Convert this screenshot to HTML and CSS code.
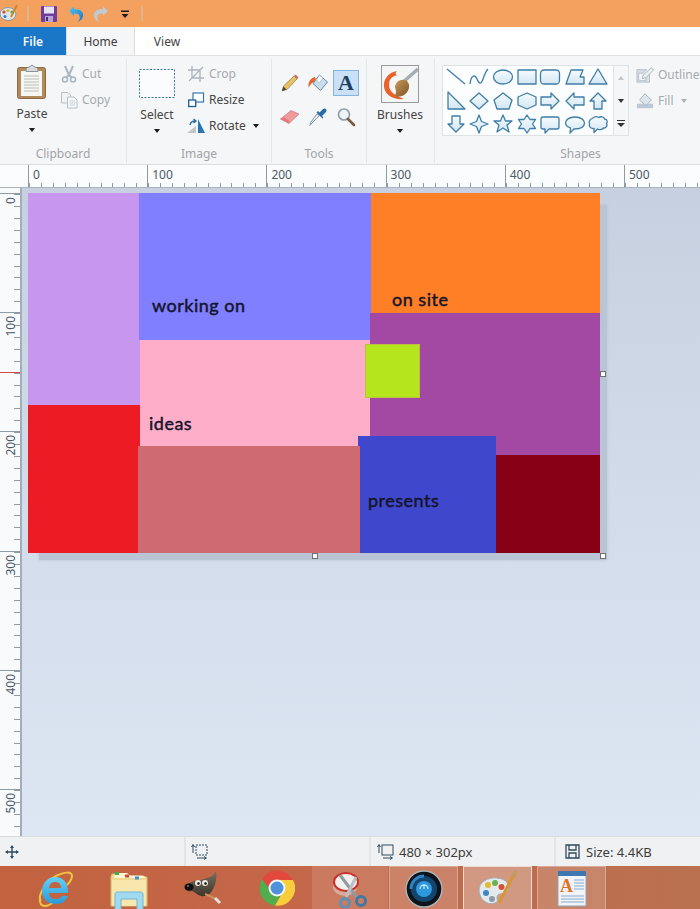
FILE: index.html
```html
<!DOCTYPE html>
<html lang="en">
<head>
<meta charset="utf-8">
<title>Paint</title>
<link rel="stylesheet" href="styles.css">
</head>
<body>
<div class="app">
  <svg width="0" height="0" class="defs">
    <defs>
      <linearGradient id="gShape" x1="0" y1="0" x2="0" y2="1"><stop offset="0" stop-color="#f6fbfe"/><stop offset="1" stop-color="#d3e6f2"/></linearGradient>
      <linearGradient id="gBlue" x1="0" y1="0" x2="1" y2="1"><stop offset="0" stop-color="#4cc3f1"/><stop offset="1" stop-color="#1c78c8"/></linearGradient>
      <linearGradient id="gIe" x1="0" y1="0" x2="0" y2="1"><stop offset="0" stop-color="#63d0f5"/><stop offset="1" stop-color="#2a9ad8"/></linearGradient>
      <linearGradient id="gBristle" x1="0" y1="0" x2="1" y2="1"><stop offset="0" stop-color="#c99a55"/><stop offset="1" stop-color="#7d5429"/></linearGradient>
      <linearGradient id="gGimp" x1="0" y1="0" x2="0" y2="1"><stop offset="0" stop-color="#7a6f60"/><stop offset="1" stop-color="#3e362c"/></linearGradient>
    </defs>
  </svg>

  <header class="titlebar">
    <svg class="qa-app" width="18" height="18" viewBox="0 0 18 18"><ellipse cx="8" cy="10" rx="8" ry="6.5" fill="#dfe6ea" stroke="#8b99a3"/><circle cx="4" cy="8" r="1.6" fill="#d9443c"/><circle cx="8" cy="6.5" r="1.6" fill="#e3b62f"/><circle cx="12" cy="8" r="1.6" fill="#59a845"/><circle cx="5" cy="12.5" r="1.6" fill="#3b82c4"/><path d="M17 1 11 13" stroke="#c78a2e" stroke-width="2"/></svg>
    <span class="qa-sep"></span>
    <svg class="qa-save" width="18" height="18" viewBox="0 0 18 18"><rect x="1" y="1" width="16" height="16" rx="1" fill="#6d3f9c"/><rect x="4" y="1.5" width="10" height="7" fill="#e9e2f3"/><rect x="5" y="11" width="8" height="6" fill="#b9a2d4"/><rect x="6" y="12" width="2" height="4" fill="#4b2a75"/></svg>
    <svg class="qa-undo" width="18" height="18" viewBox="0 0 18 18"><path d="M2 6 7 1.5V4.300C12.500 3.800 17 6.500 16 11.500 15.500 14 13.500 16 10.500 17 13 14.500 13.500 12 12 10 11 8.700 9 8.300 7 8.500V11Z" fill="url(#gBlue)"/></svg>
    <svg class="qa-redo" width="18" height="18" viewBox="0 0 18 18"><path d="M16 6 11 1.500V4.300C5.500 3.800 1 6.500 2 11.500 2.500 14 4.500 16 7.500 17 5 14.500 4.500 12 6 10 7 8.700 9 8.300 11 8.500V11Z" fill="#bccbd6"/></svg>
    <svg class="qa-more" width="10" height="10" viewBox="0 0 10 10"><path d="M1 1.500H9V3H1ZM1.500 5H8.500L5 9Z" fill="#1c1c1c"/></svg>
    <span class="qa-sep qa-sep-end"></span>
  </header>

  <nav class="tabs">
    <span class="tab tab-file">File</span>
    <span class="tab tab-home">Home</span>
    <span class="tab tab-view">View</span>
  </nav>

  <section class="ribbon">
    <div class="group group-clipboard">
      <div class="group-body">
        <div class="big-btn">
          <svg width="32" height="36" viewBox="0 0 32 36"><rect x="1.500" y="3.500" width="28" height="31" rx="2" fill="#b08a5a" stroke="#8b6a42"/><rect x="5" y="7" width="21" height="25" fill="#f7f7f2"/><path d="M8 12H23M8 15H23M8 18H23M8 21H23M8 24H23M8 27H23" stroke="#b9bcbc"/><path d="M10 6C10 3 13 4 14 2.500 15 1 17 1 18 2.500 19 4 22 3 22 6V7.500H10Z" fill="#d8dbde" stroke="#8f9296"/></svg>
          <span class="big-label">Paste</span>
          <span class="caret"></span>
        </div>
        <div class="small-col">
          <div class="small-btn is-off"><svg width="18" height="18" viewBox="0 0 18 18"><path d="M5 1 9 10 13 1M9 10 5.500 13M9 10 12.500 13" fill="none" stroke="#aab7c3" stroke-width="2"/><circle cx="5" cy="14.500" r="2.500" fill="none" stroke="#aab7c3" stroke-width="1.500"/><circle cx="13" cy="14.500" r="2.500" fill="none" stroke="#aab7c3" stroke-width="1.500"/></svg><span>Cut</span></div>
          <div class="small-btn is-off"><svg width="18" height="18" viewBox="0 0 18 18"><path d="M1.500 1.500H8L10.500 4V12H1.500Z" fill="#f0f2f4" stroke="#b6c0c9"/><path d="M7.500 6H14L17 9V17H7.500Z" fill="#f7f8f9" stroke="#b6c0c9"/><path d="M9.500 10H15M9.500 12H15M9.500 14H15" stroke="#c9d0d6"/></svg><span>Copy</span></div>
        </div>
      </div>
      <div class="group-label">Clipboard</div>
    </div>

    <div class="group group-image">
      <div class="group-body">
        <div class="big-btn big-select">
          <svg width="36" height="29" viewBox="0 0 36 29"><rect x="0.500" y="0.500" width="35" height="28" fill="#fafcfd" stroke="#3f76a3" stroke-dasharray="2 1.500"/></svg>
          <span class="big-label">Select</span>
          <span class="caret"></span>
        </div>
        <div class="small-col">
          <div class="small-btn is-off"><svg width="16" height="16" viewBox="0 0 16 16"><path d="M4 0V12H16M0 4H12V16M1 15 15 1" fill="none" stroke="#a9b5bf" stroke-width="1.300"/></svg><span>Crop</span></div>
          <div class="small-btn"><svg width="16" height="16" viewBox="0 0 16 16"><rect x="5" y="1" width="10.500" height="9" fill="#fff" stroke="#3a78a8" stroke-width="1.200"/><rect x="0.700" y="8" width="7" height="6.500" fill="#fff" stroke="#1d5f92" stroke-width="1.300"/></svg><span>Resize</span></div>
          <div class="small-btn"><svg width="18" height="16" viewBox="0 0 18 16"><path d="M11 1 18 15H11Z" fill="#2775b2"/><path d="M0 15 9 8V15Z" fill="#c4c7ca"/><path d="M3 7C3.500 4 5.500 3 8 3M6.500 1 9 3 6.500 5" fill="none" stroke="#2b6da3" stroke-width="1.400"/></svg><span>Rotate</span><span class="caret caret-inline"></span></div>
        </div>
      </div>
      <div class="group-label">Image</div>
    </div>

    <div class="group group-tools">
      <div class="tool-grid">
        <span class="tool"><svg width="20" height="20" viewBox="0 0 20 20"><path d="M2 18 3.500 13 14 3 17 6 7 16.500Z" fill="#e8c25c" stroke="#8a7a55" stroke-width=".7"/><path d="M2 18 3.500 13.500 6.500 16.500Z" fill="#4f4434"/><path d="M14 3 17 6 18.500 4.500 15.500 1.500Z" fill="#c96a6a"/></svg></span>
        <span class="tool"><svg width="22" height="20" viewBox="0 0 22 20"><path d="M12.500 2 20.500 9 13.500 17.500 6 10.500Z" fill="#c9deec" stroke="#6b8aa1"/><path d="M9.500 7 12.500 2 16 5 12.500 10Z" fill="#f7fafc" stroke="#8ea7b9" stroke-width=".6"/><path d="M8 4C3.500 5 1 9 1.500 14 3 13.500 3.500 10.500 6 9.500L9 6.500Z" fill="#e8642a"/></svg></span>
        <span class="tool tool-on"><span class="tool-a">A</span></span>
        <span class="tool"><svg width="22" height="20" viewBox="0 0 22 20"><path d="M1.500 12 12 3.500 20 7 10 16.500Z" fill="#f09a9c" stroke="#c47a7c" stroke-width=".7"/><path d="M1.500 12 10 16.500 10.500 14 4.500 10Z" fill="#e47a7e"/></svg></span>
        <span class="tool"><svg width="20" height="20" viewBox="0 0 20 20"><path d="M11.500 8.500 4 16 2 18.500 2.500 15.500 9 7Z" fill="#e4edf3" stroke="#8a9aa6"/><path d="M8.500 5.500 14.500 11.500 15.500 10.500 14 9 18 5C19.500 2.500 17 .5 15 2L11.500 5.500 10 4Z" fill="#2a6cab"/></svg></span>
        <span class="tool"><svg width="20" height="20" viewBox="0 0 20 20"><circle cx="8" cy="7.500" r="5.500" fill="#edf5fa" stroke="#8f9ba4" stroke-width="1.600"/><path d="M12 12 18 18" stroke="#7a5b3c" stroke-width="2.600" stroke-linecap="round"/></svg></span>
      </div>
      <div class="group-label">Tools</div>
    </div>

    <div class="group group-brushes">
      <div class="group-body brushes-body">
        <div class="big-btn">
          <span class="brush-box"><svg width="36" height="36" viewBox="0 0 36 36"><rect width="36" height="36" fill="#f4f5f5"/><path d="M36 3 20 17" stroke="#a4adb3" stroke-width="3.500"/><path d="M15 5C7 6 1 13 2 21 3 29 11 34 22 33 14 30 7 26 7 19 7 13 10 10 16 9 13 9 13 7 15 5Z" fill="#e9622a"/><path d="M13 21C14 15 20 12 25 15 29 19 27 26 22 29 19 31 15 31 12 30 15 28 14 24 13 21Z" fill="url(#gBristle)"/></svg></span>
          <span class="big-label">Brushes</span>
          <span class="caret"></span>
        </div>
      </div>
      <div class="group-label">&nbsp;</div>
    </div>

    <div class="group group-shapes">
      <div class="group-body shapes-body">
        <div class="gallery">
          <svg class="gallery-svg" width="170" height="70" viewBox="0 0 170 70">
            <g fill="url(#gShape)" stroke="#3f7ea6" stroke-width="1.300" stroke-linejoin="round">
              <g transform="translate(13 11)"><path d="M-9-8 9 7" fill="none"/></g>
              <g transform="translate(36 11)"><path d="M-9 7C-8-2-4-3-2 2S2 8 4 2 7-6 9-8" fill="none"/></g>
              <g transform="translate(60 11)"><ellipse rx="9.500" ry="7"/></g>
              <g transform="translate(84 11)"><rect x="-9" y="-7" width="18" height="14"/></g>
              <g transform="translate(107 11)"><rect x="-9.500" y="-7" width="19" height="14" rx="3.500"/></g>
              <g transform="translate(132 11)"><path d="M-9 7-4-7H8L5 0H9V7Z"/></g>
              <g transform="translate(155 11)"><path d="M0-8 9 7H-9Z"/></g>

              <g transform="translate(13 35)"><path d="M-8-9 9 8H-8Z"/></g>
              <g transform="translate(36 35)"><path d="M0-8 9 0 0 8-9 0Z"/></g>
              <g transform="translate(60 35)"><path d="M0-8 9-1 6 8H-6L-9-1Z"/></g>
              <g transform="translate(84 35)"><path d="M0-8 9-4V4L0 8-9 4V-4Z"/></g>
              <g transform="translate(107 35)"><path d="M-9-4H1V-8L9 0 1 8V4H-9Z"/></g>
              <g transform="translate(132 35)"><path d="M9-4H-1V-8L-9 0-1 8V4H9Z"/></g>
              <g transform="translate(155 35)"><path d="M0-8 8 0H4V8H-4V0H-8Z"/></g>

              <g transform="translate(13 58)"><path d="M0 8 8 0H4V-8H-4V0H-8Z"/></g>
              <g transform="translate(36 58)"><path d="M0-9 2.500-2.500 9 0 2.500 2.500 0 9-2.500 2.500-9 0-2.500-2.500Z"/></g>
              <g transform="translate(60 58)"><path d="M0-9 2.500-3H9L4 1 6 8 0 4-6 8-4 1-9-3H-2.500Z"/></g>
              <g transform="translate(84 58)"><path d="M0-9 3-4.500H8.500L5.500 0 8.500 4.500H3L0 9-3 4.500H-8.500L-5.500 0-8.500-4.500H-3Z"/></g>
              <g transform="translate(107 58)"><path d="M-7-7H7Q9-7 9-5V3Q9 5 7 5H-1L-5 9V5H-7Q-9 5-9 3V-5Q-9-7-7-7Z"/></g>
              <g transform="translate(132 58)"><path d="M0-7C6-7 9.500-4 9.500-1 9.500 3 5 5-1 5L-5 9-4.500 4C-7.500 3-9.500 1-9.500-1-9.500-4-6-7 0-7Z"/></g>
              <g transform="translate(155 58)"><path d="M-5-6C-3-8 0-7 1-6.500 3-8 6-7 6.500-5 9-5 10-2 8.500-.5 10 1.500 8 4.500 5.500 4 4 6 1 6-.5 5L-4 8.500-4 4.500C-7 5-9.500 2.500-8.500 0-10-2-8-5-5-6Z"/></g>
            </g>
          </svg>
          <div class="gallery-scroll">
            <span class="gs-cell"><span class="gs-up"></span></span>
            <span class="gs-cell"><span class="gs-down"></span></span>
            <span class="gs-cell"><span class="gs-more"></span></span>
          </div>
        </div>
        <div class="small-col outline-col">
          <div class="small-btn is-off"><svg width="20" height="18" viewBox="0 0 20 18"><path d="M1 3H12L8 7H3V15H11V11L15 7V17H1Z" fill="#d8dee3" stroke="#a9b4bd" stroke-width=".8"/><path d="M7 13 8 9 17 1 19.500 3.500 11 12Z" fill="#eceff1" stroke="#a9b4bd"/></svg><span>Outline</span></div>
          <div class="small-btn is-off"><svg width="20" height="18" viewBox="0 0 20 18"><rect x="1" y="12" width="18" height="5" fill="#bcc9d6"/><path d="M10 1 17 8 11 14 4 8Z" fill="#dde5ec" stroke="#a3b0bb"/></svg><span>Fill</span><span class="caret caret-inline caret-off"></span></div>
        </div>
      </div>
      <div class="group-label shapes-label">Shapes</div>
    </div>
  </section>

  <div class="ruler-top">
    <span class="rt-seg">0</span><span class="rt-seg">100</span><span class="rt-seg">200</span><span class="rt-seg">300</span><span class="rt-seg">400</span><span class="rt-seg">500</span>
  </div>

  <main class="stage">
    <aside class="ruler-left">
      <span class="rl-seg"><span class="rl-num">0</span></span>
      <span class="rl-seg"><span class="rl-num">100</span></span>
      <span class="rl-seg"><span class="rl-num">200</span></span>
      <span class="rl-seg"><span class="rl-num">300</span></span>
      <span class="rl-seg"><span class="rl-num">400</span></span>
      <span class="rl-seg"><span class="rl-num">500</span></span>
      <span class="rl-marker"></span>
    </aside>
    <div class="workspace">
      <div class="canvas-shadow"></div>
      <div class="canvas">
        <div class="block b-lavender"></div>
        <div class="block b-peri"></div>
        <div class="block b-orange"></div>
        <div class="block b-purple"></div>
        <div class="block b-pink"></div>
        <div class="block b-red"></div>
        <div class="block b-blue"></div>
        <div class="block b-dusty"></div>
        <div class="block b-maroon"></div>
        <div class="block b-lime"></div>
        <span class="hand t-working">working on</span>
        <span class="hand t-site">on site</span>
        <span class="hand t-ideas">ideas</span>
        <span class="hand t-presents">presents</span>
      </div>
      <span class="handle h-r"></span>
      <span class="handle h-b"></span>
      <span class="handle h-c"></span>
    </div>
  </main>

  <footer class="status">
    <div class="st st-pos"><svg width="16" height="16" viewBox="0 0 16 16"><path d="M8 1 10 4H8.700V7.300H12V6L15 8 12 10V8.700H8.700V12H10L8 15 6 12H7.300V8.700H4V10L1 8 4 6V7.300H7.300V4H6Z" fill="#2f4a5e"/></svg></div>
    <div class="st st-sel"><svg width="18" height="17" viewBox="0 0 18 17"><rect x="5" y="2" width="11" height="10" fill="none" stroke="#2f4a5e" stroke-dasharray="2 1"/><path d="M2 2V10M.5 4 2 1.500 3.500 4M6 15H15M13 13.500 15.500 15 13 16.500" fill="none" stroke="#2f4a5e"/></svg></div>
    <div class="st st-dim"><svg width="18" height="17" viewBox="0 0 18 17"><rect x="5" y="2" width="11" height="10" fill="none" stroke="#2f4a5e"/><path d="M2 2V10M.5 4 2 1.500 3.500 4M6 15H15M13 13.500 15.500 15 13 16.500" fill="none" stroke="#2f4a5e"/></svg><span>480 × 302px</span></div>
    <div class="st st-size"><svg width="15" height="15" viewBox="0 0 15 15"><path d="M1 1H14V14H1ZM4 1V6H11V1M4 14V9H11V14" fill="none" stroke="#2f4a5e" stroke-width="1.300"/></svg><span>Size: 4.4KB</span></div>
  </footer>

  <div class="taskbar">
    <span class="task"><svg width="36" height="38" viewBox="0 0 36 38"><path d="M4 31C0 27 8 12 19 6 27 2 35 1 35 6 35 9 33 12 30 15" fill="none" stroke="#efc43e" stroke-width="2"/><path d="M3 27C2 33 4 36 8 36 11 36 14 34 17 32" fill="none" stroke="#efc43e" stroke-width="2"/><path d="M5 21C5 13 11 7 18 7 26 7 31 13 31 21V23H12C12 27 15 29 19 29 22 29 24 28 25 26H31C29 31 25 34 19 34 11 34 5 29 5 21ZM12 18H24C24 14 21.500 12 18 12 15 12 12.500 14 12 18Z" fill="url(#gIe)"/></svg></span>
    <span class="task"><svg width="38" height="40" viewBox="0 0 38 40"><path d="M1 7V36H37V7L19 6 16 4H2Z" fill="#f0d98f" stroke="#d6bd75"/><path d="M5 3H17L20 5.500H33L36 8H4Z" fill="#fff4d0"/><rect x="5" y="2" width="4" height="3" fill="#37b24a"/><rect x="15" y="4.500" width="4" height="3" fill="#d8413a"/><rect x="25" y="6.500" width="4" height="3" fill="#3b93d6"/><path d="M2 10H36V36H2Z" fill="#f7e7ad"/><path d="M5 40V24C5 23 6 22 7 22H31C32 22 33 23 33 24V40H27V29H11V40Z" fill="#9fdaf0" stroke="#73b7d6"/></svg></span>
    <span class="task"><svg width="40" height="36" viewBox="0 0 40 36"><path d="M3 16C6 12 10 12 13 10 17 11 20 9 24 8 28 7 31 5 33 1 34 8 33 14 30 19 28 24 23 27 18 26 14 25 12 22 9 21 5 22 1 20 3 16Z" fill="url(#gGimp)"/><ellipse cx="6" cy="17" rx="4.500" ry="3.500" fill="#111"/><circle cx="5" cy="16" r="1" fill="#777"/><circle cx="15" cy="13" r="3" fill="#ece9e1"/><circle cx="22" cy="13" r="3" fill="#ece9e1"/><circle cx="15.500" cy="13.500" r="1.300" fill="#111"/><circle cx="22.500" cy="13.500" r="1.300" fill="#111"/><path d="M22 24 33 29" stroke="#c8935f" stroke-width="2"/><path d="M32 28 37 33" stroke="#e7e2d8" stroke-width="3"/></svg></span>
    <span class="task"><svg width="36" height="36" viewBox="0 0 36 36"><circle cx="18" cy="18" r="17.500" fill="#e2483c"/><path d="M3 9A17.500 17.500 0 0 0 16 35.500L24 22H13Z" fill="#52ae4c"/><path d="M18 10H34A17.500 17.500 0 0 1 16 35.500L25 20Z" fill="#f7cd3b"/><circle cx="18" cy="18" r="8.500" fill="#f4f6f8"/><circle cx="18" cy="18" r="6.500" fill="#4f92dc"/></svg></span>
    <span class="task task-hover"><svg width="38" height="38" viewBox="0 0 38 38"><ellipse cx="14" cy="17" rx="12" ry="9" fill="#d9a896"/><ellipse cx="15" cy="12" rx="12" ry="9" fill="#f3efec" stroke="#c9322c" stroke-width="2"/><path d="M9 5 27 29" stroke="#8f9aa0" stroke-width="3"/><path d="M25 7 15 27" stroke="#b7c0c6" stroke-width="3"/><circle cx="30" cy="31" r="4.500" fill="none" stroke="#3f78a5" stroke-width="3"/><circle cx="14" cy="33" r="4.500" fill="none" stroke="#5f8fb5" stroke-width="3"/></svg></span>
    <span class="task task-box"><svg width="38" height="38" viewBox="0 0 38 38"><circle cx="19" cy="19" r="18" fill="#0e1319"/><circle cx="19" cy="19" r="18" fill="none" stroke="#aab2b8" stroke-width="1.500"/><circle cx="19" cy="19" r="13" fill="#13466f"/><path d="M6 19A13 13 0 0 1 19 6" fill="none" stroke="#2d84c4" stroke-width="3"/><circle cx="19" cy="19" r="8" fill="#2f97dc"/><path d="M15 19A4 4 0 0 1 23 19M19 19V15" fill="none" stroke="#bfe6fa" stroke-width="1.300"/></svg></span>
    <span class="task task-box task-active"><svg width="42" height="38" viewBox="0 0 42 38"><path d="M2 20C2 12 11 7 20 8 30 9 33 15 31 20 29 25 24 22 21 25 18 28 23 31 18 33 10 36 2 29 2 20Z" fill="#e4e9ec" stroke="#a2adb4"/><circle cx="11" cy="15" r="3" fill="#e2b92f"/><circle cx="18" cy="13" r="3" fill="#6cb24a"/><circle cx="24.500" cy="17" r="3" fill="#d84e3d"/><circle cx="9" cy="23" r="3" fill="#3d88c5"/><circle cx="15" cy="29" r="3" fill="#8a9aa6"/><path d="M37 4 22 33" stroke="#d69630" stroke-width="3"/><path d="M34 6 37 0 41 2 38 8Z" fill="#c49a63"/></svg></span>
    <span class="task task-box"><svg width="30" height="38" viewBox="0 0 30 38"><path d="M1 4H29V36H1Z" fill="#f1f4f7" stroke="#93a3b1"/><rect x="1" y="1" width="28" height="5" fill="#3f77b0"/><text x="3" y="22" class="wp-a">A</text><path d="M17 10H27M17 13H27M17 16H27M17 19H27M4 26H27M4 29H27M4 32H27" stroke="#86abd1"/></svg></span>
  </div>
</div>
</body>
</html>
```

FILE: styles.css
```css
* { box-sizing: border-box; }
html, body { margin: 0; padding: 0; }
body { font-family: "Noto Sans", "Open Sans", sans-serif; font-size: 12px; color: #444; background: #fff; }
.app { width: 700px; height: 909px; display: flex; flex-direction: column; overflow: hidden; position: relative; }
.defs { position: absolute; }
svg { display: block; flex: none; }

/* title bar */
.titlebar { height: 27px; background: #f4a160; display: flex; align-items: center; flex: none; }
.qa-app { margin-left: 0; margin-top: -2px; }
.qa-sep { width: 2px; height: 15px; background: #e0b48c; margin-left: 9px; }
.qa-save { margin-left: 11px; }
.qa-undo { margin-left: 9px; }
.qa-redo { margin-left: 7px; }
.qa-more { margin-left: 10px; }
.qa-sep-end { margin-left: 11px; }

/* tabs */
.tabs { height: 28px; background: #fff; display: flex; flex: none; }
.tab { display: flex; align-items: center; justify-content: center; font-size: 12px; }
.tab-file { width: 66px; background: #1a76c6; color: #f2f7fc; font-weight: 600; }
.tab-home { width: 69px; background: #f5f6f7; border-left: 1px solid #dcdfe2; border-right: 1px solid #dcdfe2; color: #3c3c3c; }
.tab-view { width: 64px; color: #444; }

/* ribbon */
.ribbon { height: 110px; background: #f5f6f7; display: flex; border-top: 1px solid #dfe1e4; border-bottom: 1px solid #dcdfe2; flex: none; }
.group { display: flex; flex-direction: column; border-right: 1px solid #e4e6e8; margin: 3px 0 1px; flex: none; }
.group-body { flex: 1; display: flex; min-height: 0; }
.group-label { height: 18px; text-align: center; color: #a0a4a8; font-size: 12px; line-height: 18px; }
.group-clipboard { width: 127px; }
.group-image { width: 145px; }
.group-tools { width: 95px; }
.group-brushes { width: 68px; }
.group-shapes { width: 265px; border-right: 0; overflow: hidden; }

.big-btn { display: flex; flex-direction: column; align-items: center; width: 50px; padding-top: 5px; flex: none; }
.group-clipboard .big-btn { margin-left: 7px; width: 50px; }
.big-label { margin-top: 5px; line-height: 18px; color: #444; }
.big-select { margin-left: 5px; padding-top: 10px; }
.big-select .big-label { margin-top: 8px; }
.caret { width: 0; height: 0; border: 3.500px solid transparent; border-top: 4px solid #1c1c1c; border-bottom: 0; margin-top: 5px; }
.caret-inline { margin: 0 0 0 3px; }
.caret-off { border-top-color: #a9b0b6; }

.small-col { display: flex; flex-direction: column; gap: 7px; padding-top: 5px; }
.group-image .small-col { margin-left: 5px; }
.group-clipboard .small-col { margin-left: 3px; }
.small-btn { display: flex; align-items: center; gap: 4px; height: 19px; color: #444; white-space: nowrap; }
.small-btn svg { width: 18px; }
.is-off { color: #a6abb0; }

.tool-grid { display: grid; grid-template-columns: repeat(3, 28px); grid-auto-rows: 26px; row-gap: 8px; align-content: start; justify-content: center; padding: 11px 0 0 0; flex: 1; }
.tool { display: flex; align-items: center; justify-content: center; width: 26px; height: 26px; }
.tool-on { background: #c9e0f7; border: 1px solid #86b4dd; }
.tool-a { font-family: "Liberation Serif", serif; font-weight: 700; font-size: 22px; line-height: 22px; color: #1c3f66; }

.brushes-body { justify-content: center; }
.brushes-body .big-btn { padding-top: 6px; margin-left: -1px; }
.brush-box { width: 38px; height: 38px; border: 1px solid #9b9b9b; display: block; }
.brushes-body .big-label { margin-top: 3px; }

.shapes-body { padding: 6px 0 0 7px; gap: 7px; }
.gallery { display: flex; width: 187px; height: 71px; border: 1px solid #e0e3e6; flex: none; background: #fbfdfe; }
.gallery-svg { width: 170px; }
.gallery-scroll { width: 16px; display: flex; flex-direction: column; background: #f5f6f7; border-left: 1px solid #e0e3e6; }
.gs-cell { flex: 1; display: flex; align-items: center; justify-content: center; }
.gs-up { border: 3.500px solid transparent; border-bottom: 4px solid #c3c7ca; border-top: 0; }
.gs-down { border: 3.500px solid transparent; border-top: 4px solid #333; border-bottom: 0; }
.gs-more { width: 8px; height: 7px; border-top: 1.500px solid #333; position: relative; }
.gs-more::after { content: ""; position: absolute; left: 0; top: 2px; border: 4px solid transparent; border-top: 4px solid #333; border-bottom: 0; }
.outline-col { padding-top: 0; gap: 7px; }
.shapes-label { width: 187px; margin-left: 52px; padding-left: 0; }

/* rulers */
.ruler-top { height: 23px; background: #fbfcfd; display: flex; padding-left: 28px; border-bottom: 1px solid #aab4c1; flex: none; position: relative; }
.rt-seg { width: 119.200px; flex: none; border-left: 1px solid #8f9aa7; padding-left: 4px; line-height: 19px; color: #4b5966; font-size: 12px;
  background: repeating-linear-gradient(90deg, #8f9aa7 0 1px, transparent 1px 11.920px) left bottom / 100% 4px no-repeat; }
.stage { flex: 1; display: flex; min-height: 0; }
.ruler-left { width: 22px; background: #f8fafc; border-right: 2px solid #a3aebd; padding-top: 5px; flex: none; position: relative; overflow: hidden; display: flex; flex-direction: column; }
.rl-seg { height: 119.200px; flex: none; border-top: 1px solid #8f9aa7; padding-top: 3px; position: relative;
  background: repeating-linear-gradient(180deg, #8f9aa7 0 1px, transparent 1px 11.920px) right top / 6px 100% no-repeat; }
.rl-num { writing-mode: vertical-rl; transform: rotate(180deg); display: block; line-height: 17px; color: #4b5966; font-size: 12px; margin-left: 2px; width: 14px; }
.rl-marker { position: absolute; left: 0; top: 184px; width: 22px; height: 1px; background: #d24a4a; }

/* workspace and free canvas */
.workspace { flex: 1; position: relative; overflow: hidden; background: linear-gradient(180deg, #c6d0e0 0%, #d2dcea 50%, #dde6f3 100%); }
.canvas-shadow { position: absolute; left: 17px; top: 17px; width: 568px; height: 355px; background: #b9c5d5; box-shadow: 0 0 3px #b9c5d5; }
.canvas { position: absolute; left: 6px; top: 5px; width: 572px; height: 360px; background: #fff; }
.block { position: absolute; }
.b-lavender { left: 0; top: 0; width: 112px; height: 212px; background: #c796ef; }
.b-peri { left: 111px; top: 0; width: 232px; height: 147px; background: #7f7fff; }
.b-orange { left: 343px; top: 0; width: 229px; height: 120px; background: #ff7f27; }
.b-purple { left: 342px; top: 120px; width: 230px; height: 155px; background: #a349a4; }
.b-pink { left: 112px; top: 147px; width: 230px; height: 106px; background: #ffaec9; }
.b-red { left: 0; top: 212px; width: 112px; height: 148px; background: #ed1c24; }
.b-dusty { left: 110px; top: 253px; width: 222px; height: 107px; background: #cd6a72; }
.b-blue { left: 330px; top: 243px; width: 138px; height: 117px; background: #3f48cc; }
.b-maroon { left: 468px; top: 262px; width: 104px; height: 98px; background: #880015; }
.b-lime { left: 337px; top: 151px; width: 55px; height: 54px; background: #b5e61d; border: 1px solid #bcc03c; }
.hand { position: absolute; font-family: "Lato", "Noto Sans", sans-serif; font-size: 18px; font-weight: 400; -webkit-text-stroke: .45px #14142a; color: #14142a; letter-spacing: .5px; line-height: 22px; white-space: nowrap; }
.t-working { left: 124px; top: 101px; }
.t-site { left: 364px; top: 95px; }
.t-ideas { left: 121px; top: 219px; }
.t-presents { left: 340px; top: 296px; }
.handle { position: absolute; width: 6px; height: 6px; background: #fff; border: 1px solid #707070; }
.h-r { left: 578px; top: 183px; }
.h-b { left: 290px; top: 365px; }
.h-c { left: 578px; top: 365px; }

/* status bar */
.status { height: 30px; background: #f0f1f2; border-top: 1px solid #d8dbde; display: flex; flex: none; }
.st { display: flex; align-items: center; gap: 4px; border-right: 2px solid #e2e4e6; color: #3c3c3c; font-size: 13px; }
.st-pos { width: 186px; padding-left: 4px; }
.st-sel { width: 185px; padding-left: 5px; }
.st-dim { width: 185px; padding-left: 6px; }
.st-size { flex: 1; border-right: 0; padding-left: 9px; gap: 6px; }

/* taskbar */
.taskbar { height: 43px; background: linear-gradient(90deg, #c2623f 0%, #c4684a 45%, #b9714f 100%); display: flex; padding-left: 20px; gap: 5px; overflow: hidden; flex: none; }
.task { width: 69px; height: 43px; display: flex; align-items: flex-start; justify-content: center; padding-top: 4px; flex: none; }
.task-hover { margin: 0 -4px; width: 76px; background: rgba(255,255,255,.12); }
.task-box { background: rgba(255,255,255,.16); border: 1px solid rgba(255,255,255,.3); border-bottom: 0; padding-top: 3px; }
.task-active { background: rgba(255,255,255,.3); border: 1px solid rgba(255,255,255,.65); border-bottom: 0; }
.wp-a { font-family: "Liberation Serif", serif; font-size: 18px; font-weight: 700; fill: #e0722a; }
```
